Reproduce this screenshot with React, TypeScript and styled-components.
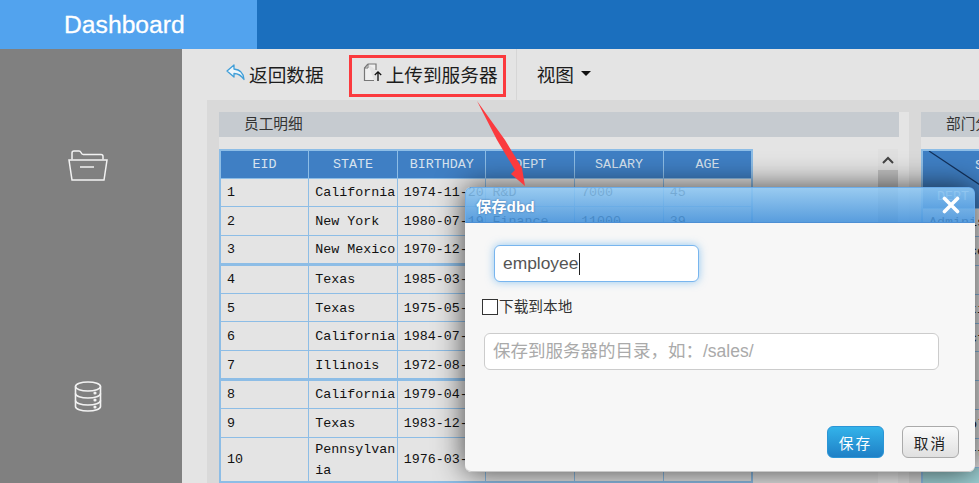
import React from 'react';
import styled, { createGlobalStyle } from 'styled-components';

const GlobalStyle = createGlobalStyle`
  html, body {
    margin: 0;
    padding: 0;
    background: #e4e4e4;
  }
  * { box-sizing: border-box; }
`;

const uiFont = `"Liberation Sans", "Noto Sans CJK SC", sans-serif`;
const monoFont = `"Liberation Mono", "Noto Sans CJK SC", monospace`;

const Page = styled.div`
  position: relative;
  width: 979px;
  height: 483px;
  overflow: hidden;
  display: flex;
  flex-direction: column;
  font-family: ${uiFont};
`;

const TopBar = styled.header`
  flex: none;
  height: 49px;
  display: flex;
  background: #1b6fbe;
`;

const Brand = styled.div`
  width: 257px;
  padding-left: 64px;
  background: #52a3ee;
  color: #fff;
  font-size: 24.7px;
  line-height: 49px;
  -webkit-text-stroke: 0.3px #fff;
`;

const Body = styled.div`
  flex: 1;
  min-height: 0;
  display: flex;
`;

const Sidebar = styled.nav`
  flex: none;
  width: 182px;
  padding: 101px 6px 0 0;
  display: flex;
  flex-direction: column;
  align-items: center;
  gap: 200px;
  background: #808080;
`;

const Main = styled.main`
  flex: 1;
  min-width: 0;
  display: flex;
  flex-direction: column;
  background: #e4e4e4;
`;

const Toolbar = styled.div`
  flex: none;
  height: 51px;
  padding: 6px 0 3px 44px;
  display: flex;
  align-items: stretch;
`;

const ToolButton = styled.div<{ $marked?: boolean }>`
  display: flex;
  align-items: center;
  gap: 3px;
  height: 42px;
  padding-bottom: 6px;
  font-size: 18.67px;
  color: #1c1c1c;
  white-space: nowrap;
  ${(props) =>
    props.$marked
      ? 'width: 157px; margin-left: 25px; padding-left: 11px; border: 3px solid #fb3a3e;'
      : ''}
`;

const ToolDivider = styled.div`
  width: 1px;
  height: 51px;
  margin: -6px 20px 0 10px;
  background: #d6d6d6;
`;

const CaretDown = styled.span`
  width: 0;
  height: 0;
  margin-left: 4px;
  border-left: 5px solid transparent;
  border-right: 5px solid transparent;
  border-top: 5px solid #111;
`;

const Content = styled.div`
  flex: 1;
  min-height: 0;
  margin-left: 25px;
  padding: 12px 0 0 12px;
  display: flex;
  gap: 12px;
  overflow: hidden;
  background: #d9d9d9;
`;

const Panel = styled.section<{ $width: number }>`
  flex: none;
  width: ${(props) => props.$width}px;
  display: flex;
  flex-direction: column;
  background: #e4e4e4;
`;

const PanelTitle = styled.div<{ $width: number }>`
  flex: none;
  width: ${(props) => props.$width}px;
  height: 25px;
  padding-left: 25px;
  background: #c6cbd0;
  color: #333;
  font-size: 14.67px;
  line-height: 25px;
  white-space: nowrap;
`;

const PanelBody = styled.div`
  width: 680px;
  padding: 12px 1px 0 0;
  display: flex;
  justify-content: space-between;
  align-items: flex-start;
`;

const DataTable = styled.table<{ $width: number }>`
  flex: none;
  width: ${(props) => props.$width}px;
  table-layout: fixed;
  border-collapse: collapse;
  border: 2px solid #8dbde6;
  font-family: ${monoFont};
  font-size: 13.33px;
  color: #111;
`;

const HeadCell = styled.th`
  height: 28px;
  padding: 0;
  background: #3f7fc4;
  border: 1px solid #8dbde6;
  color: #d7e3ef;
  font-weight: 400;
  text-align: center;
`;

const Row = styled.tr<{ $thick?: boolean }>`
  ${(props) => (props.$thick ? 'border-bottom: 3px solid #8dbde6;' : '')}
`;

const Cell = styled.td<{ $bg?: string }>`
  height: 28.8px;
  padding: 1px 1px 0 6px;
  border: 1px solid #8dbde6;
  background: ${(props) => props.$bg || 'transparent'};
  line-height: 21px;
  word-break: break-all;
`;

const DiagonalHead = styled.th`
  position: relative;
  height: 58px;
  padding: 0;
  background: #3f7fc4;
  border: 1px solid #8dbde6;
  color: #d7e3ef;
  font-weight: 400;
`;

const DiagonalLine = styled.svg`
  position: absolute;
  left: 0;
  top: 0;
`;

const HeadTop = styled.span`
  position: absolute;
  left: 52px;
  top: 7px;
`;

const HeadBottom = styled.span`
  position: absolute;
  left: 14px;
  bottom: 4px;
`;

const ScrollBar = styled.div`
  flex: none;
  width: 20px;
  height: 340px;
  background: #ececec;
`;

const ScrollUp = styled.div`
  height: 21px;
  display: flex;
  align-items: center;
  justify-content: center;
  background: #e0e0e0;
`;

const ScrollThumb = styled.div`
  height: 140px;
  background: #c1c1c1;
`;

const Modal = styled.div`
  position: absolute;
  left: 465px;
  top: 187px;
  width: 510px;
  height: 285px;
  display: flex;
  flex-direction: column;
  border-radius: 6px;
  overflow: hidden;
  box-shadow: 0 0 30px rgba(0, 0, 0, 0.72);
`;

const ModalHead = styled.div`
  flex: none;
  height: 36px;
  padding: 0 14px 0 10px;
  display: flex;
  align-items: center;
  justify-content: space-between;
  border: 1px solid rgba(110, 175, 235, 0.9);
  border-bottom-color: #4d8fd4;
  border-radius: 6px 6px 0 0;
  background: linear-gradient(rgba(142, 199, 242, 0.88), rgba(69, 147, 220, 0.88));
`;

const ModalTitle = styled.span`
  color: #fff;
  font-size: 15.3px;
  font-weight: 700;
  text-shadow: 0 0 2px rgba(40, 90, 150, 0.8);
`;

const ModalBody = styled.div`
  flex: 1;
  min-height: 0;
  display: flex;
  flex-direction: column;
  background: #f7f7f7;
  border-radius: 0 0 6px 6px;
  box-shadow: inset 0 -1px 0 #c8c8c8;
`;

const FocusField = styled.div`
  width: 205px;
  height: 37px;
  margin: 22px 0 0 29px;
  padding-left: 8px;
  display: flex;
  align-items: center;
  background: #fff;
  border: 1px solid #78b5ee;
  border-radius: 6px;
  box-shadow: 0 0 8px rgba(82, 168, 236, 0.6);
  color: #555;
  font-size: 17.4px;
`;

const TextCaret = styled.span`
  width: 1px;
  height: 22px;
  margin-left: 1px;
  background: #222;
`;

const CheckRow = styled.label`
  margin: 17px 0 0 17px;
  height: 16px;
  display: flex;
  align-items: center;
  color: #333;
  font-size: 14.67px;
  line-height: 14px;
`;

const CheckBox = styled.input`
  appearance: none;
  width: 16px;
  height: 16px;
  margin: 0 1px 0 0;
  background: #fff;
  border: 1px solid #333;
`;

const PathInput = styled.input`
  width: 455px;
  height: 37px;
  margin: 18px 0 0 19px;
  padding: 0 8px;
  background: #fff;
  border: 1px solid #ccc;
  border-radius: 6px;
  outline: none;
  font-family: ${uiFont};
  font-size: 17.5px;
  &::placeholder {
    color: #aaa;
    opacity: 1;
  }
`;

const ModalFoot = styled.div`
  margin-top: auto;
  padding: 0 16px 14px 0;
  display: flex;
  justify-content: flex-end;
  gap: 18px;
`;

const DialogButton = styled.button<{ $primary?: boolean }>`
  width: 57px;
  height: 32px;
  padding: 0;
  border-radius: 6px;
  border: 1px solid ${(props) => (props.$primary ? '#2b95d6' : '#aaa')};
  background: ${(props) =>
    props.$primary
      ? 'linear-gradient(#33b3ea, #1f80c6)'
      : 'linear-gradient(#fbfbfb, #e0e0e0)'};
  color: ${(props) => (props.$primary ? '#fff' : '#222')};
  font-family: ${uiFont};
  font-size: 14.67px;
  letter-spacing: 2px;
`;

const ArrowMark = styled.svg`
  position: absolute;
  left: 470px;
  top: 96px;
`;

const employees = [
  ['1', 'California', '1974-11-20', 'R&D', '7000', '45'],
  ['2', 'New York', '1980-07-19', 'Finance', '11000', '39'],
  ['3', 'New Mexico', '1970-12-17', 'Sales', '9000', '48'],
  ['4', 'Texas', '1985-03-07', 'Sales', '7000', '33'],
  ['5', 'Texas', '1975-05-13', 'Finance', '16000', '43'],
  ['6', 'California', '1984-07-07', 'Sales', '11000', '34'],
  ['7', 'Illinois', '1972-08-16', 'HR', '9000', '46'],
  ['8', 'California', '1979-04-19', 'Sales', '9000', '39'],
  ['9', 'Texas', '1983-12-07', 'Sales', '7000', '35'],
  ['10', 'Pennsylvania', '1976-03-12', 'R&D', '14000', '42'],
];

const columns = ['EID', 'STATE', 'BIRTHDAY', 'DEPT', 'SALARY', 'AGE'];

const departments = ['Administration', 'Finance', 'HR', 'Marketing', 'Production', 'R&D', 'Sales', 'Technology', 'Support'];

const FolderIcon = () => (
  <svg width="40" height="31" viewBox="0 0 40 31" fill="none" stroke="#f2f2f2" strokeWidth="1.5">
    <path d="M1 10h38l-3 20H4z" />
    <path d="M4 9.500V3c0-1.200.8-2 2-2h5c1 0 1.500.5 2 1.500.4 1 1 2 2.200 2H33c1.200 0 2 .8 2 2v3" />
    <path d="M12 17h14" />
  </svg>
);

const DatabaseIcon = () => (
  <svg width="28" height="31" viewBox="0 0 28 31" fill="none" stroke="#f2f2f2" strokeWidth="1.6">
    <ellipse cx="14" cy="5.500" rx="12.500" ry="4.500" />
    <path d="M1.500 5.500v20c0 2.500 5.600 4.500 12.500 4.500s12.500-2 12.500-4.500v-20" />
    <path d="M1.500 12.500c0 2.500 5.600 4.500 12.500 4.500s12.500-2 12.500-4.500" />
    <path d="M1.500 19.500c0 2.500 5.600 4.500 12.500 4.500s12.500-2 12.500-4.500" />
    <circle cx="21" cy="12" r="0.8" fill="#f2f2f2" />
    <circle cx="21" cy="19" r="0.8" fill="#f2f2f2" />
    <circle cx="21" cy="26" r="0.8" fill="#f2f2f2" />
  </svg>
);

const ReplyIcon = () => (
  <svg width="20" height="18" viewBox="0 0 20 18" fill="#eef6fb" stroke="#3f9ed8" strokeWidth="1.300" strokeLinejoin="round">
    <path d="M8 1 1 7l7 6V9.500c4 0 7 1.500 10 6-.5-6-4-10-10-10.500z" />
  </svg>
);

const UploadFileIcon = () => (
  <svg width="20" height="20" viewBox="0 0 20 20" fill="none">
    <path d="M5 1h8v6M5 1 1.500 5v12.500H11" stroke="#777" strokeWidth="1.200" fill="#f0f0f0" />
    <path d="M5 1v4H1.500" stroke="#777" strokeWidth="1" />
    <path d="M15 18v-9M11.800 12 15 8.800l3.200 3.200" stroke="#111" strokeWidth="1.300" />
  </svg>
);

const ChevronUp = () => (
  <svg width="12" height="8" viewBox="0 0 12 8" fill="none" stroke="#444" strokeWidth="2">
    <path d="M1 7l5-5 5 5" />
  </svg>
);

const CloseIcon = () => (
  <svg width="18" height="18" viewBox="0 0 18 18" stroke="#fff" strokeWidth="3.600" strokeLinecap="round">
    <path d="M2.500 2.500l13 13M15.500 2.500l-13 13" />
  </svg>
);

export default function App() {
  return (
    <Page>
      <GlobalStyle />
      <TopBar>
        <Brand>Dashboard</Brand>
      </TopBar>
      <Body>
        <Sidebar>
          <FolderIcon />
          <DatabaseIcon />
        </Sidebar>
        <Main>
          <Toolbar>
            <ToolButton>
              <ReplyIcon />
              返回数据
            </ToolButton>
            <ToolButton $marked>
              <UploadFileIcon />
              上传到服务器
            </ToolButton>
            <ToolDivider />
            <ToolButton>
              视图
              <CaretDown />
            </ToolButton>
          </Toolbar>
          <Content>
            <Panel $width={690}>
              <PanelTitle $width={680}>员工明细</PanelTitle>
              <PanelBody>
                <DataTable $width={534}>
                  <thead>
                    <tr>
                      {columns.map((name) => (
                        <HeadCell key={name}>{name}</HeadCell>
                      ))}
                    </tr>
                  </thead>
                  <tbody>
                    {employees.map((row) => (
                      <Row key={row[0]} $thick={row[0] === '3' || row[0] === '7'}>
                        {row.map((value, i) => (
                          <Cell key={i}>{value}</Cell>
                        ))}
                      </Row>
                    ))}
                  </tbody>
                </DataTable>
                <ScrollBar>
                  <ScrollUp>
                    <ChevronUp />
                  </ScrollUp>
                  <ScrollThumb />
                </ScrollBar>
              </PanelBody>
            </Panel>
            <Panel $width={300}>
              <PanelTitle $width={300}>部门分布</PanelTitle>
              <PanelBody>
                <DataTable $width={200}>
                  <thead>
                    <tr>
                      <DiagonalHead>
                        <DiagonalLine width="200" height="58" viewBox="0 0 200 58">
                          <path d="M6 0l90 60" stroke="#12305a" strokeWidth="1.200" />
                        </DiagonalLine>
                        <HeadTop>SALARY</HeadTop>
                        <HeadBottom>DEPT</HeadBottom>
                      </DiagonalHead>
                    </tr>
                  </thead>
                  <tbody>
                    {departments.map((name) => (
                      <tr key={name}>
                        <Cell>{name}</Cell>
                      </tr>
                    ))}
                    <tr>
                      <Cell $bg="#9fd2d6" />
                    </tr>
                  </tbody>
                </DataTable>
              </PanelBody>
            </Panel>
          </Content>
        </Main>
      </Body>
      <Modal>
        <ModalHead>
          <ModalTitle>保存dbd</ModalTitle>
          <CloseIcon />
        </ModalHead>
        <ModalBody>
          <FocusField>
            employee
            <TextCaret />
          </FocusField>
          <CheckRow>
            <CheckBox type="checkbox" />
            下载到本地
          </CheckRow>
          <PathInput placeholder="保存到服务器的目录，如：/sales/" />
          <ModalFoot>
            <DialogButton $primary>保存</DialogButton>
            <DialogButton>取消</DialogButton>
          </ModalFoot>
        </ModalBody>
      </Modal>
      <ArrowMark width="64" height="100" viewBox="0 0 64 100">
        <path d="M7 5 35 44 52 72 55 90 41 78 45 74 27 44z" fill="#fb3a3e" />
      </ArrowMark>
    </Page>
  );
}
